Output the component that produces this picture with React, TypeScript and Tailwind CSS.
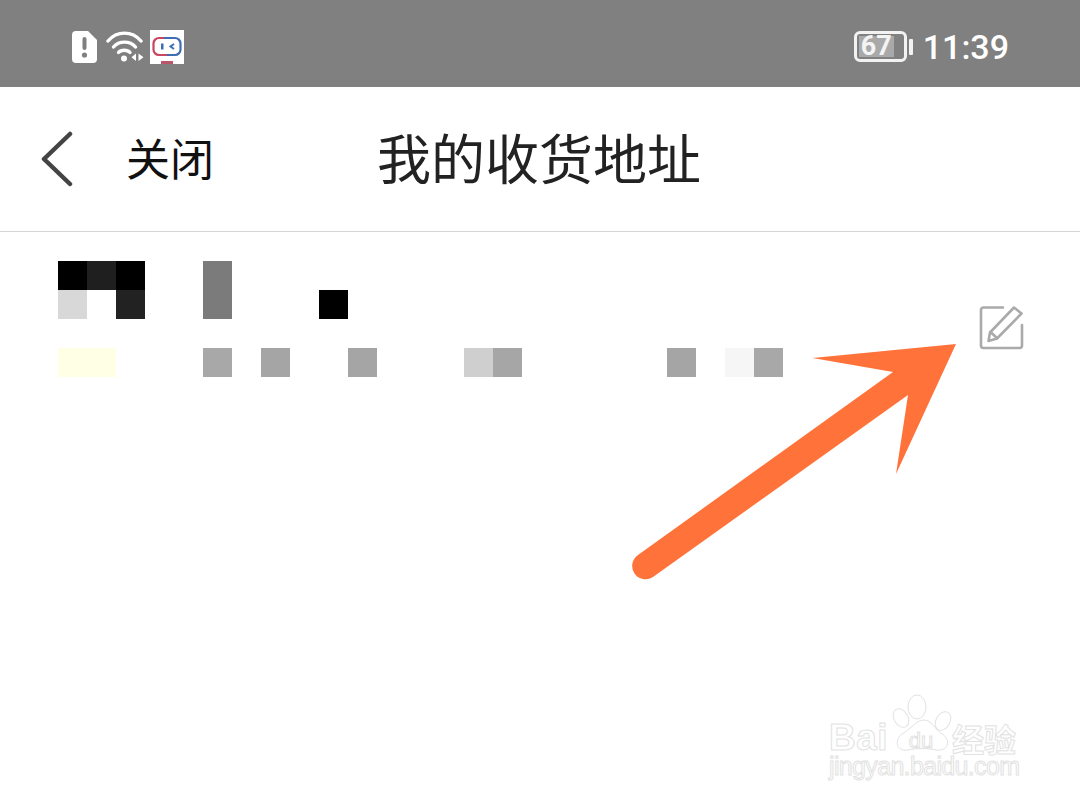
import React from 'react';

const CJK = "font-['Liberation_Sans','Noto_Sans_CJK_SC',sans-serif]";

// pixelated name and address, one entry per 29px cell
const nameRow1 = ['bg-[#000000]', 'bg-[#1f1f1f]', 'bg-[#000000]', '', '', 'bg-[#7b7b7b]'];
const nameRow2 = ['bg-[#d8d8d8]', '', 'bg-[#222222]', '', '', 'bg-[#7b7b7b]', '', '', '', 'bg-[#000000]'];
const addressRow = [
  'bg-[#ffffe6]', 'bg-[#ffffe6]', '', '', '', 'bg-[#a8a8a8]', '', 'bg-[#a5a5a5]', '', '', 'bg-[#a5a5a5]', '', '', '',
  'bg-[#cfcfcf]', 'bg-[#a6a6a6]', '', '', '', '', '', 'bg-[#a5a5a5]', '', 'bg-[#f6f6f6]', 'bg-[#a8a8a8]',
];

const MosaicRow: React.FC<{ cells: string[] }> = ({ cells }) => (
  <div className="flex h-[29px]">
    {cells.map((c, i) => (
      <div key={i} className={`w-[29px] h-[29px] ${c}`}></div>
    ))}
  </div>
);

const StatusBar = () => (
  <div className="h-[87px] bg-[#808080] flex items-center justify-between pl-[72px] pr-[71px] pt-[6px]">
    <div className="flex items-center">
      <svg width="25" height="32" viewBox="0 0 25 32">
        <path d="M4 0H16L25 9V28a4 4 0 0 1-4 4H4a4 4 0 0 1-4-4V4a4 4 0 0 1 4-4Z" fill="#fff" />
        <rect x="10.5" y="6" width="4" height="13" rx="2" fill="#808080" />
        <circle cx="12.5" cy="24" r="2.6" fill="#808080" />
      </svg>
      <svg className="ml-[9px]" width="38" height="32" viewBox="0 0 38 32" fill="none" stroke="#fff" strokeWidth="3.4" strokeLinecap="round">
        <path d="M2 10C11 -0.5 26 -0.5 35 10" />
        <path d="M7.5 16C13 9.5 24 9.5 29.5 16" />
        <path d="M12.5 21.5C15 18.5 21.5 18.5 24 21.5" />
        <circle cx="18" cy="27.5" r="3" fill="#fff" stroke="none" />
        <path d="M30 22.5V30L25.5 26.2Z" fill="#fff" stroke="none" />
        <path d="M32.5 22.5V30L37.5 26.2Z" fill="#fff" stroke="none" />
      </svg>
      <div className="ml-[6px] w-[34px] h-[34px] bg-white flex items-center justify-center">
        <svg width="34" height="34" viewBox="0 0 34 34" fill="none">
          <path d="M14 8H9a5.500 5.500 0 0 0-5.500 5.500v6a5.500 5.500 0 0 0 5.500 5.500h8" stroke="#c8465f" strokeWidth="2.200" />
          <path d="M14 8H25a5.500 5.500 0 0 1 5.500 5.500v6a5.500 5.500 0 0 1-5.500 5.500H17" stroke="#3f6db5" strokeWidth="2.200" />
          <rect x="11" y="13.500" width="2.500" height="6" fill="#3f6db5" />
          <path d="M24 14L20.500 16.500L24 19" stroke="#3f6db5" strokeWidth="2" />
          <rect x="11" y="31" width="12" height="3" fill="#b9566c" />
        </svg>
      </div>
    </div>
    <div className="flex items-center">
      <div className="w-[53px] h-[31px] border-[3px] border-[#f2f2f2] rounded-[6px] p-[2px]">
        <div className="w-[35px] h-full bg-[#a9a9a9] flex items-center justify-center">
          <span className="text-[27px] leading-none font-bold text-[#f4f4f4] font-['Roboto',sans-serif]">67</span>
        </div>
      </div>
      <div className="ml-[2px] w-[4px] h-[16px] bg-[#f2f2f2] rounded-[1px]"></div>
      <span className="ml-[10px] text-[34px] leading-none font-medium text-white font-['Roboto',sans-serif]">11:39</span>
    </div>
  </div>
);

const Header = () => (
  <div className="h-[145px] border-b border-[#d4d4d4] flex items-center pl-[41px] pb-[1px]">
    <svg width="32" height="56" viewBox="0 0 32 56" fill="none" stroke="#444" strokeWidth="4.500" strokeLinecap="round" strokeLinejoin="round">
      <path d="M29 3L3 28L29 53" />
    </svg>
    <span className={`ml-[53px] mt-[5px] text-[44px] leading-none text-[#111] ${CJK}`}>关闭</span>
    <span className={`ml-[163px] mt-[5px] text-[54px] leading-none text-[#222] ${CJK}`}>我的收货地址</span>
  </div>
);

const EditIcon = () => (
  <svg width="46" height="46" viewBox="0 0 46 46" fill="none" stroke="#aaaaaa" strokeWidth="2.600" strokeLinejoin="round" strokeLinecap="round">
    <path d="M25 2.500H5.500a2.500 2.500 0 0 0-2.500 2.500V40.500a2.500 2.500 0 0 0 2.500 2.500H41.500a2.500 2.500 0 0 0 2.500-2.500V20" />
    <path d="M36 2.500L43.500 8.500L19 33.500L10.500 36L12 27.500Z" />
    <path d="M12.500 27L19 33" />
  </svg>
);

// baidu jingyan watermark, thin gray outlines on white
const Watermark = () => (
  <svg className="absolute left-[820px] top-[680px]" width="220" height="110" viewBox="0 0 220 110" fill="#fff" stroke="#e2e2e2" strokeWidth="1">
    <ellipse cx="97" cy="27" rx="9" ry="12" />
    <ellipse cx="81" cy="38" rx="7" ry="10" transform="rotate(-30 81 38)" />
    <ellipse cx="123" cy="41" rx="7" ry="10" transform="rotate(30 123 41)" />
    <path d="M104 40C112 40 115 50 122 54C132 60 128 72 116 70C108 68 96 68 88 70C76 72 74 60 82 54C90 50 96 40 104 40Z" />
    <text x="101" y="68" fontSize="22" fontFamily="Liberation Sans, sans-serif" textAnchor="middle">du</text>
    <text x="9" y="70" fontSize="37" fontWeight="700" fontFamily="Liberation Sans, sans-serif" letterSpacing="0.5">Bai</text>
    <text x="132" y="72" fontSize="32" fontWeight="700" fontFamily="Noto Sans CJK SC, sans-serif">经验</text>
    <text x="9" y="95" fontSize="25" fontFamily="Liberation Sans, sans-serif" textLength="191">jingyan.baidu.com</text>
  </svg>
);

export default function App() {
  return (
    <div className="relative w-[1080px] h-[810px] bg-white overflow-hidden">
      <StatusBar />
      <Header />
      <div className="flex justify-between pl-[58px] pr-[56px] pt-[29px]">
        <div>
          <MosaicRow cells={nameRow1} />
          <MosaicRow cells={nameRow2} />
          <div className="h-[29px]"></div>
          <MosaicRow cells={addressRow} />
        </div>
        <div className="pt-[44px]">
          <EditIcon />
        </div>
      </div>

      {/* orange annotation arrow */}
      <svg className="absolute left-0 top-0" width="1080" height="810" viewBox="0 0 1080 810">
        <path d="M956 344L812.500 358L893 372L638 555A13 13 0 0 0 653 577L908 395L896 474Z" fill="#ff733b" />
      </svg>
      <Watermark />
    </div>
  );
}
